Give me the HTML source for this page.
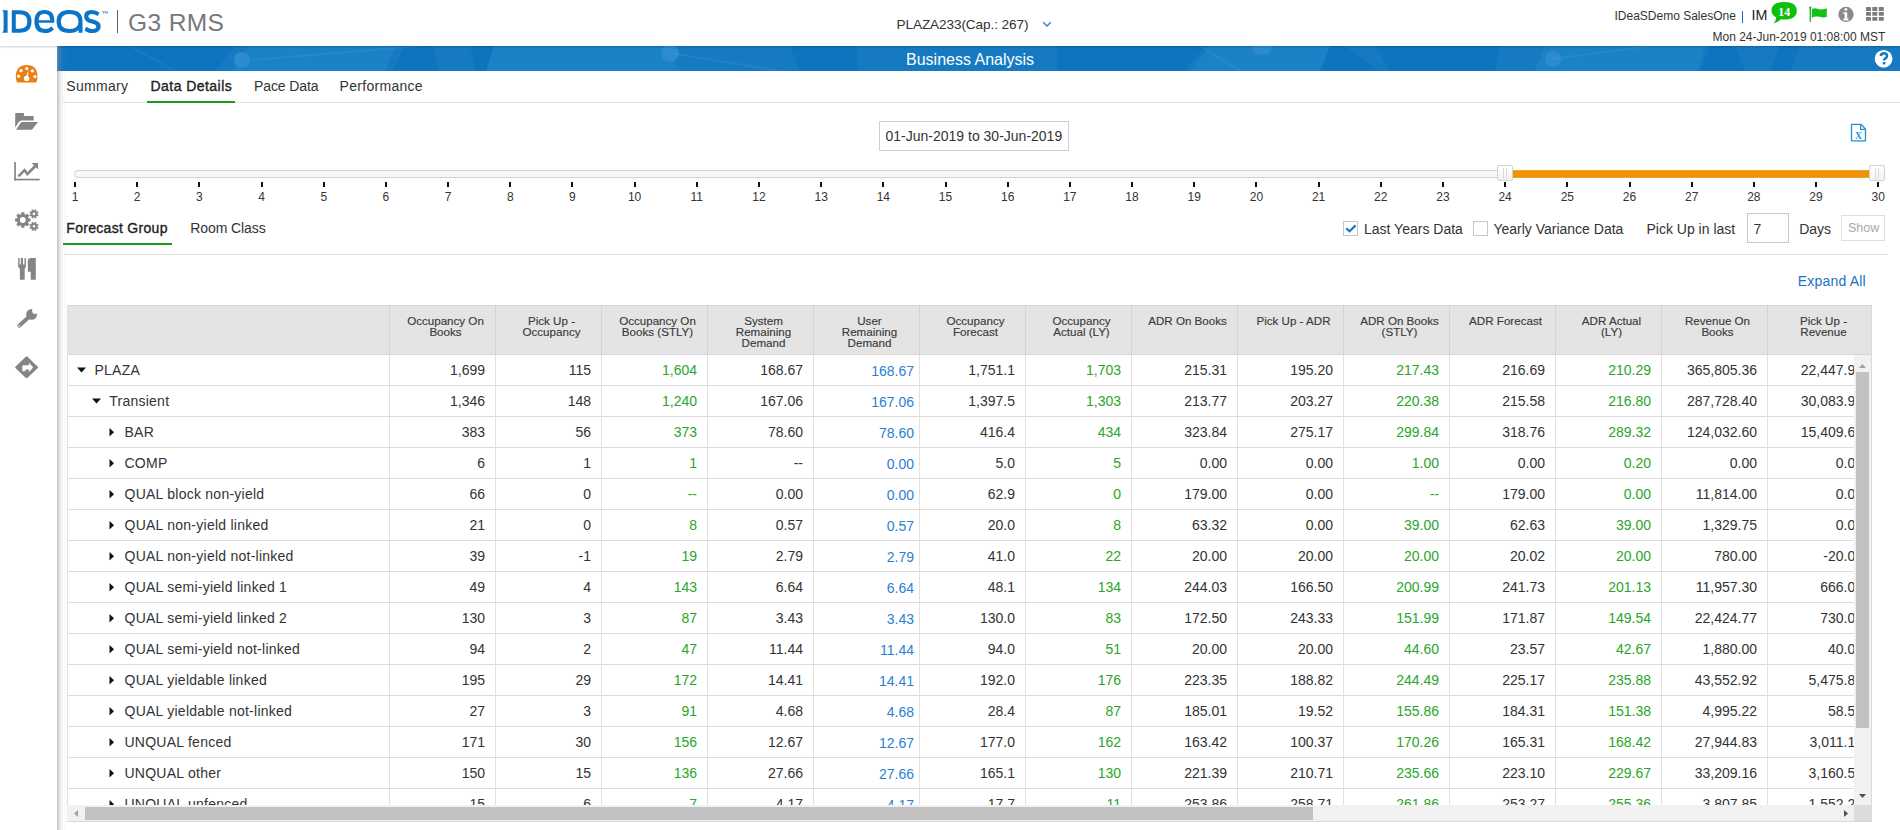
<!DOCTYPE html><html><head><meta charset="utf-8"><style>
html,body{margin:0;padding:0;-webkit-font-smoothing:antialiased;}
body{width:1900px;height:830px;overflow:hidden;position:relative;background:#fff;font-family:"Liberation Sans",sans-serif;color:#333;}
.a{position:absolute;}
.t{position:absolute;white-space:nowrap;line-height:0;}
.sb{-webkit-text-stroke:0.35px currentColor;}
.g{color:#2aa52a;}
.b{color:#2a7fd4;}
</style></head><body>

<!-- header -->
<div class="a" style="left:0;top:0;width:1900px;height:46px;background:#fff;box-shadow:0 1px 2px rgba(0,0,0,0.2);z-index:2;">
<svg class="a" style="left:0;top:8px" width="112" height="28" viewBox="0 0 112 28">
 <g fill="#0a74c8" fill-rule="evenodd">
  <path d="M2.2 2.2H7.6V24.8H2.2Q3.6 23.6 3.6 21.5V5.5Q3.6 3.4 2.2 2.2Z"/>
  <path d="M11.8 2.2H19.5Q31.5 2.2 31.5 13.5Q31.5 24.8 19.5 24.8H11.8ZM15.8 6.3V20.7H19.5Q27.4 20.7 27.4 13.5Q27.4 6.3 19.5 6.3Z"/>
  <path d="M54.3 14.8H38.6Q39.2 21 45.2 21Q48.6 21 51.4 18.4L54 21.4Q50.6 25 45 25Q34.4 25 34.4 13.5Q34.4 2 44.4 2Q54.5 2 54.3 13ZM38.6 12.2H50.3Q49.9 5.8 44.4 5.8Q39 5.8 38.6 12.2Z"/>
  <path d="M82.5 24.8H78.5V22Q76 25 69.5 25Q56.6 25 56.6 13.5Q56.6 2 69.5 2Q82.5 2 82.5 13ZM60.8 13.5Q60.8 21 69.7 21Q78.5 21 78.5 13.5Q78.5 6 69.7 6Q60.8 6 60.8 13.5Z"/>
  <path d="M99.6 4.8L97.6 8Q94.8 5.9 91.6 5.9Q88.4 5.9 88.4 8.4Q88.4 10.4 92.4 11.3Q100.7 13.2 100.7 18.2Q100.7 25 92 25Q87.2 25 84.4 22.2L86.4 18.8Q89.2 21.1 92.2 21.1Q96.3 21.1 96.3 18.5Q96.3 16.4 91.6 15.4Q84.1 13.8 84.1 8.4Q84.1 2 91.6 2Q96.4 2 99.6 4.8Z"/>
  <path d="M102 3.2H104.5V3.7H103.5V5.6H103V3.7H102ZM104.8 3.2H105.4L106.2 4.6L107 3.2H107.6V5.6H107.1V4L106.2 5.5L105.3 4V5.6H104.8Z"/>
 </g>
</svg>
<div class="a" style="left:117px;top:10px;width:1px;height:23px;background:#606060;"></div>
<div class="t" style="left:128px;top:22.7px;font-size:24.5px;color:#77787b;letter-spacing:0.4px;">G3 RMS</div>
<div class="t" style="left:896.5px;top:24.7px;font-size:13.6px;color:#333;letter-spacing:-0.1px;">PLAZA233(Cap.: 267)</div>
<svg class="a" style="left:1042px;top:21px" width="10" height="7"><path d="M1.2 1.2L5 5L8.8 1.2" fill="none" stroke="#2a7fd4" stroke-width="1.3"/></svg>
<div class="t" style="left:1614.5px;top:16px;font-size:12px;color:#333;">IDeaSDemo SalesOne</div>
<div class="a" style="left:1742px;top:11px;width:1px;height:12px;background:#1a6fc0;"></div>
<div class="t" style="left:1751.5px;top:14.7px;font-size:14.3px;color:#222;">IM</div>
<svg class="a" style="left:1770px;top:1px" width="28" height="24" viewBox="0 0 28 24">
 <path d="M14.2 1Q26.8 1 26.8 9.8Q26.8 18.6 14.2 18.6Q12.5 18.6 11 18.3Q7.5 21.5 3.3 22.5Q6 20 6.2 16.5Q1.5 14 1.5 9.8Q1.5 1 14.2 1Z" fill="#0cc00c"/>
 <text x="14.2" y="14.7" font-family="Liberation Serif" font-weight="bold" font-size="11.8" fill="#fff" text-anchor="middle">14</text>
</svg>
<svg class="a" style="left:1808px;top:6px" width="20" height="17" viewBox="0 0 20 17">
 <rect x="1.6" y="1.5" width="1.4" height="14.5" fill="#2bb52b"/>
 <circle cx="2.3" cy="1.8" r="1.2" fill="#2bb52b"/>
 <path d="M3.8 3.2Q6.5 1.6 9.5 2.8Q12.5 4 15 3.2Q17.5 2.5 18.8 2.2V10.8Q16.5 11.8 13.5 11.2Q10.5 10 7.5 10.6Q5.5 11.2 3.8 11.8Z" fill="#16c116"/>
</svg>
<svg class="a" style="left:1838px;top:6px" width="16" height="17" viewBox="0 0 16 17">
 <ellipse cx="8" cy="8.3" rx="7.7" ry="7.6" fill="#8a8a8a"/>
 <rect x="6.6" y="2.2" width="2.6" height="2.4" fill="#fff"/>
 <path d="M5.4 6.2H9.2V12.5H10.5V14.4H5.4V12.5H6.6V8H5.4Z" fill="#fff"/>
</svg>
<svg class="a" style="left:1866px;top:7px" width="18" height="14" viewBox="0 0 18 14">
 <g fill="#7c7c7c">
  <rect x="0" y="0" width="5" height="4" rx="0.6"/><rect x="6.3" y="0" width="5" height="4" rx="0.6"/><rect x="12.8" y="0" width="5" height="4" rx="0.6"/>
  <rect x="0" y="5" width="5" height="3.8" rx="0.6"/><rect x="6.3" y="5" width="5" height="3.8" rx="0.6"/><rect x="12.8" y="5" width="5" height="3.8" rx="0.6"/>
  <rect x="0" y="10" width="5" height="3.8" rx="0.6"/><rect x="6.3" y="10" width="5" height="3.8" rx="0.6"/><rect x="12.8" y="10" width="5" height="3.8" rx="0.6"/>
 </g>
</svg>
<div class="t" style="left:1712.5px;top:36.5px;font-size:12px;color:#333;">Mon 24-Jun-2019 01:08:00 MST</div>
</div>
<!-- sidebar -->

<svg class="a" style="left:0;top:46px" width="57" height="340" viewBox="0 46 57 340">
 <g>
  <path d="M17 82.6Q15.6 79.5 15.8 76Q16.4 65.1 26.7 65.1Q37 65.1 37.5 76Q37.7 79.5 36.3 82.6Z" fill="#ea7f14"/>
  <g fill="#fff">
   <circle cx="26.8" cy="68.6" r="1.6"/><circle cx="21" cy="70.7" r="1.6"/><circle cx="32.4" cy="70.9" r="1.6"/>
   <circle cx="18.6" cy="76.2" r="1.6"/><circle cx="35" cy="76.6" r="1.6"/>
   <circle cx="26.6" cy="78.4" r="2.7"/>
   <path d="M25.6 78L28 71.2L28.6 71.4L27.6 78.3Z"/>
  </g>
 </g>
 <g fill="#858585">
  <path d="M15.2 113.8Q15.2 113 16 113H23.9V116H33Q33.7 116 33.7 116.7V120.5H21.5Q19.6 120.5 18.6 122.2L15.2 127.6Z"/>
  <path d="M21.9 122H38L32 129.8H16.1L20.4 123.2Q21 122 21.9 122Z"/>
 </g>
 <g fill="#858585">
  <rect x="14.2" y="162" width="1.7" height="18.4"/>
  <rect x="14.2" y="178.7" width="25.4" height="1.7"/>
  <path d="M18.4 176.4L24.6 170.2L27.4 174L35.4 166" fill="none" stroke="#858585" stroke-width="2.5"/><path d="M31.6 162.9H38V169.3Z"/>
 </g>
 <g fill="#858585">
<path fill-rule="evenodd" d="M28.45 218.29 L30.54 218.43 L30.54 221.57 L28.45 221.71 L28.00 222.78 L29.39 224.36 L27.16 226.59 L25.58 225.20 L24.51 225.65 L24.37 227.74 L21.23 227.74 L21.09 225.65 L20.02 225.20 L18.44 226.59 L16.21 224.36 L17.60 222.78 L17.15 221.71 L15.06 221.57 L15.06 218.43 L17.15 218.29 L17.60 217.22 L16.21 215.64 L18.44 213.41 L20.02 214.80 L21.09 214.35 L21.23 212.26 L24.37 212.26 L24.51 214.35 L25.58 214.80 L27.16 213.41 L29.39 215.64 L28.00 217.22ZM25.70 220.00A2.9 2.9 0 1 0 19.90 220.00A2.9 2.9 0 1 0 25.70 220.00Z"/>
<path fill-rule="evenodd" d="M37.38 214.23 L38.61 214.80 L37.90 216.53 L36.63 216.06 L36.16 216.53 L36.63 217.80 L34.90 218.51 L34.33 217.28 L33.67 217.28 L33.10 218.51 L31.37 217.80 L31.84 216.53 L31.37 216.06 L30.10 216.53 L29.39 214.80 L30.62 214.23 L30.62 213.57 L29.39 213.00 L30.10 211.27 L31.37 211.74 L31.84 211.27 L31.37 210.00 L33.10 209.29 L33.67 210.52 L34.33 210.52 L34.90 209.29 L36.63 210.00 L36.16 211.27 L36.63 211.74 L37.90 211.27 L38.61 213.00 L37.38 213.57ZM35.30 213.90A1.3 1.3 0 1 0 32.70 213.90A1.3 1.3 0 1 0 35.30 213.90Z"/>
<path fill-rule="evenodd" d="M37.38 226.63 L38.61 227.20 L37.90 228.93 L36.63 228.46 L36.16 228.93 L36.63 230.20 L34.90 230.91 L34.33 229.68 L33.67 229.68 L33.10 230.91 L31.37 230.20 L31.84 228.93 L31.37 228.46 L30.10 228.93 L29.39 227.20 L30.62 226.63 L30.62 225.97 L29.39 225.40 L30.10 223.67 L31.37 224.14 L31.84 223.67 L31.37 222.40 L33.10 221.69 L33.67 222.92 L34.33 222.92 L34.90 221.69 L36.63 222.40 L36.16 223.67 L36.63 224.14 L37.90 223.67 L38.61 225.40 L37.38 225.97ZM35.30 226.30A1.3 1.3 0 1 0 32.70 226.30A1.3 1.3 0 1 0 35.30 226.30Z"/>
 </g>
 <g fill="#858585">
  <path d="M18.2 258H19.6V264.5H20.8V258H23V264.5H24.5V258H25.9V266Q25.9 268.2 24.7 268.8V279.7H19.9V268.8Q18.2 268.2 18.2 266Z"/>
  <path d="M27.8 261.2Q27.8 258 31 258H35.8V279.7H30.7V271.7H27.8Z"/>
 </g>
 <g fill="#858585">
  <path d="M19.2 325.8L29.5 316.5" stroke="#858585" stroke-width="3.9" stroke-linecap="round" fill="none"/>
  <circle cx="31.6" cy="314.4" r="5.4"/>
  <circle cx="34.9" cy="311.1" r="2.8" fill="#fff"/>
  <path d="M34.9 311.1L40 306L41 312L37 314Z" fill="#fff"/>
  <circle cx="19.2" cy="325.8" r="0.85" fill="#fff"/>
 </g>
 <g>
  <path d="M26.6 357.2L37.2 367.3L26.6 377.4L16 367.3Z" fill="#858585" stroke="#858585" stroke-width="1.8" stroke-linejoin="round"/>
  <path d="M22.3 371.2V366.3Q22.3 365.3 23.3 365.3H28.9V362.6L33.1 367.4L28.9 372.2V369.4H25.3V371.2Z" fill="#fff"/>
 </g>
</svg>
<!-- blue bar -->
<div class="a" style="left:57px;top:46px;width:1843px;height:25px;background:#167ac3;overflow:hidden;">
 <svg class="a" style="left:0;top:0" width="1843" height="25" viewBox="57 0 1843 25">
  <g fill="#0e74c0">
   <path d="M57 0H235L215 25H57Z"/>
   <path d="M404 0H434L438 25H393Z"/>
   <path d="M470 0H494L486 25H476Z"/>
   <path d="M790 0H857V25H800Z"/>
   <path d="M1057 0H1205L1185 25H1057Z"/>
   <path d="M1330 0H1345L1380 25H1320Z"/>
   <path d="M1375 0H1457V25H1390Z"/>
   <path d="M1457 0H1500L1495 25H1457Z"/>
   <path d="M1710 0H1735L1745 25H1700Z"/>
   <path d="M1780 0H1800L1790 25H1770Z"/>
  </g>
  <g fill="#1c82c8">
   <path d="M250 0H395L385 25H232Z"/>
   <path d="M494 0H660L680 25H486Z"/>
   <path d="M1210 0H1330L1320 25H1190Z"/>
   <path d="M1545 0H1705L1698 25H1535Z"/>
  </g>
  <g fill="#2d8bcf">
   <circle cx="242" cy="14" r="8"/>
   <circle cx="670" cy="7" r="9"/>
   <circle cx="1262" cy="-2" r="11"/>
   <circle cx="1553" cy="13" r="8"/>
  </g>
  <g stroke="rgba(255,255,255,0.05)" stroke-width="2" fill="none">
   <path d="M130 0L175 25"/><path d="M250 14L420 0"/><path d="M670 7L780 25"/><path d="M1200 0L1240 25"/><path d="M1553 13L1650 0"/>
  </g>
 </svg>
 <div class="t" style="left:849px;top:14px;font-size:16px;color:#fff;">Business Analysis</div>
 <svg class="a" style="left:1817px;top:3px" width="20" height="20" viewBox="0 0 20 20">
  <circle cx="9.6" cy="9.8" r="8.9" fill="#fff"/>
  <path d="M6.7 6.9Q7.2 4.3 9.9 4.3Q13 4.3 13 6.9Q13 8.5 11.2 9.5Q10.1 10.1 10.1 11.6" fill="none" stroke="#1375c1" stroke-width="2.5"/>
  <rect x="8.8" y="13" width="2.6" height="2.4" fill="#1375c1"/>
 </svg>
</div>

<div class="a" style="left:57px;top:46px;width:1px;height:784px;background:rgba(150,150,150,0.55);z-index:3;"></div><div class="a" style="left:58px;top:46px;width:1px;height:784px;background:rgba(150,150,150,0.4);z-index:3;"></div><div class="a" style="left:59px;top:46px;width:1px;height:784px;background:rgba(150,150,150,0.28);z-index:3;"></div><div class="a" style="left:60px;top:46px;width:1px;height:784px;background:rgba(150,150,150,0.19);z-index:3;"></div><div class="a" style="left:61px;top:46px;width:1px;height:784px;background:rgba(150,150,150,0.12);z-index:3;"></div><div class="a" style="left:62px;top:46px;width:1px;height:784px;background:rgba(150,150,150,0.08);z-index:3;"></div><div class="a" style="left:63px;top:46px;width:1px;height:784px;background:rgba(150,150,150,0.06);z-index:3;"></div><div class="a" style="left:64px;top:46px;width:1px;height:784px;background:rgba(150,150,150,0.05);z-index:3;"></div><div class="a" style="left:65px;top:46px;width:1px;height:784px;background:rgba(150,150,150,0.04);z-index:3;"></div><div class="a" style="left:66px;top:46px;width:1px;height:784px;background:rgba(150,150,150,0.03);z-index:3;"></div>

<div class="t" style="left:66.3px;top:86px;font-size:14px;color:#333;letter-spacing:0.3px;">Summary</div>
<div class="t sb" style="left:150.5px;top:86px;font-size:14px;color:#222;letter-spacing:0.45px;">Data Details</div>
<div class="t" style="left:254px;top:86px;font-size:14px;color:#333;letter-spacing:-0.1px;">Pace Data</div>
<div class="t" style="left:339.5px;top:86px;font-size:14px;color:#333;letter-spacing:0.3px;">Performance</div>
<div class="a" style="left:63px;top:102px;width:1837px;height:1px;background:#e3e3e3;"></div>
<div class="a" style="left:147px;top:100.5px;width:88px;height:2.5px;background:#1a9a1a;"></div>
<div class="a" style="left:879px;top:121px;width:188px;height:28px;border:1px solid #cfcfcf;"></div>
<div class="t" style="left:885.5px;top:135.5px;font-size:14px;color:#333;">01-Jun-2019 to 30-Jun-2019</div>
<svg class="a" style="left:1849px;top:123px" width="18" height="19" viewBox="0 0 18 19">
 <path d="M2.5 1.3H11.8L16.5 6V17.8H2.5Z" fill="none" stroke="#2290d8" stroke-width="1.3" stroke-linejoin="round"/>
 <path d="M11.6 1.4V6.3H16.4" fill="none" stroke="#2290d8" stroke-width="1.2"/>
 <text x="9.5" y="15.6" font-family="Liberation Serif" font-weight="bold" font-size="9.5" fill="#2290d8" text-anchor="middle">X</text>
</svg>
<div class="a" style="left:74px;top:170px;width:1808px;height:8px;box-sizing:border-box;border:1px solid #d0d0d0;border-radius:4px;background:#f8f8f8;"></div>
<div class="a" style="left:1510px;top:170px;width:362px;height:8px;box-sizing:border-box;border-top:1px solid #e6a03c;border-bottom:1px solid #e6a03c;background:#f39200;"></div>
<div class="a" style="left:1496.5px;top:165px;width:16px;height:16px;box-sizing:border-box;border:1px solid #d2d2d2;border-radius:2px;background:linear-gradient(#fff,#f3f3f3);"></div>
<div class="a" style="left:1502.5px;top:168px;width:1px;height:11px;background:#dadada;"></div>
<div class="a" style="left:1505.5px;top:168px;width:1px;height:11px;background:#dadada;"></div>
<div class="a" style="left:1869px;top:165px;width:16px;height:16px;box-sizing:border-box;border:1px solid #d2d2d2;border-radius:2px;background:linear-gradient(#fff,#f3f3f3);"></div>
<div class="a" style="left:1875px;top:168px;width:1px;height:11px;background:#dadada;"></div>
<div class="a" style="left:1878px;top:168px;width:1px;height:11px;background:#dadada;"></div>
<div class="a" style="left:74.00px;top:182px;width:2px;height:5px;background:#111;"></div>
<div class="t" style="left:45.00px;top:196.5px;width:60px;text-align:center;font-size:12px;color:#333;">1</div>
<div class="a" style="left:136.18px;top:182px;width:2px;height:5px;background:#111;"></div>
<div class="t" style="left:107.18px;top:196.5px;width:60px;text-align:center;font-size:12px;color:#333;">2</div>
<div class="a" style="left:198.36px;top:182px;width:2px;height:5px;background:#111;"></div>
<div class="t" style="left:169.36px;top:196.5px;width:60px;text-align:center;font-size:12px;color:#333;">3</div>
<div class="a" style="left:260.54px;top:182px;width:2px;height:5px;background:#111;"></div>
<div class="t" style="left:231.54px;top:196.5px;width:60px;text-align:center;font-size:12px;color:#333;">4</div>
<div class="a" style="left:322.72px;top:182px;width:2px;height:5px;background:#111;"></div>
<div class="t" style="left:293.72px;top:196.5px;width:60px;text-align:center;font-size:12px;color:#333;">5</div>
<div class="a" style="left:384.90px;top:182px;width:2px;height:5px;background:#111;"></div>
<div class="t" style="left:355.90px;top:196.5px;width:60px;text-align:center;font-size:12px;color:#333;">6</div>
<div class="a" style="left:447.08px;top:182px;width:2px;height:5px;background:#111;"></div>
<div class="t" style="left:418.08px;top:196.5px;width:60px;text-align:center;font-size:12px;color:#333;">7</div>
<div class="a" style="left:509.26px;top:182px;width:2px;height:5px;background:#111;"></div>
<div class="t" style="left:480.26px;top:196.5px;width:60px;text-align:center;font-size:12px;color:#333;">8</div>
<div class="a" style="left:571.44px;top:182px;width:2px;height:5px;background:#111;"></div>
<div class="t" style="left:542.44px;top:196.5px;width:60px;text-align:center;font-size:12px;color:#333;">9</div>
<div class="a" style="left:633.62px;top:182px;width:2px;height:5px;background:#111;"></div>
<div class="t" style="left:604.62px;top:196.5px;width:60px;text-align:center;font-size:12px;color:#333;">10</div>
<div class="a" style="left:695.80px;top:182px;width:2px;height:5px;background:#111;"></div>
<div class="t" style="left:666.80px;top:196.5px;width:60px;text-align:center;font-size:12px;color:#333;">11</div>
<div class="a" style="left:757.98px;top:182px;width:2px;height:5px;background:#111;"></div>
<div class="t" style="left:728.98px;top:196.5px;width:60px;text-align:center;font-size:12px;color:#333;">12</div>
<div class="a" style="left:820.16px;top:182px;width:2px;height:5px;background:#111;"></div>
<div class="t" style="left:791.16px;top:196.5px;width:60px;text-align:center;font-size:12px;color:#333;">13</div>
<div class="a" style="left:882.34px;top:182px;width:2px;height:5px;background:#111;"></div>
<div class="t" style="left:853.34px;top:196.5px;width:60px;text-align:center;font-size:12px;color:#333;">14</div>
<div class="a" style="left:944.52px;top:182px;width:2px;height:5px;background:#111;"></div>
<div class="t" style="left:915.52px;top:196.5px;width:60px;text-align:center;font-size:12px;color:#333;">15</div>
<div class="a" style="left:1006.70px;top:182px;width:2px;height:5px;background:#111;"></div>
<div class="t" style="left:977.70px;top:196.5px;width:60px;text-align:center;font-size:12px;color:#333;">16</div>
<div class="a" style="left:1068.88px;top:182px;width:2px;height:5px;background:#111;"></div>
<div class="t" style="left:1039.88px;top:196.5px;width:60px;text-align:center;font-size:12px;color:#333;">17</div>
<div class="a" style="left:1131.06px;top:182px;width:2px;height:5px;background:#111;"></div>
<div class="t" style="left:1102.06px;top:196.5px;width:60px;text-align:center;font-size:12px;color:#333;">18</div>
<div class="a" style="left:1193.24px;top:182px;width:2px;height:5px;background:#111;"></div>
<div class="t" style="left:1164.24px;top:196.5px;width:60px;text-align:center;font-size:12px;color:#333;">19</div>
<div class="a" style="left:1255.42px;top:182px;width:2px;height:5px;background:#111;"></div>
<div class="t" style="left:1226.42px;top:196.5px;width:60px;text-align:center;font-size:12px;color:#333;">20</div>
<div class="a" style="left:1317.60px;top:182px;width:2px;height:5px;background:#111;"></div>
<div class="t" style="left:1288.60px;top:196.5px;width:60px;text-align:center;font-size:12px;color:#333;">21</div>
<div class="a" style="left:1379.78px;top:182px;width:2px;height:5px;background:#111;"></div>
<div class="t" style="left:1350.78px;top:196.5px;width:60px;text-align:center;font-size:12px;color:#333;">22</div>
<div class="a" style="left:1441.96px;top:182px;width:2px;height:5px;background:#111;"></div>
<div class="t" style="left:1412.96px;top:196.5px;width:60px;text-align:center;font-size:12px;color:#333;">23</div>
<div class="a" style="left:1504.14px;top:182px;width:2px;height:5px;background:#111;"></div>
<div class="t" style="left:1475.14px;top:196.5px;width:60px;text-align:center;font-size:12px;color:#333;">24</div>
<div class="a" style="left:1566.32px;top:182px;width:2px;height:5px;background:#111;"></div>
<div class="t" style="left:1537.32px;top:196.5px;width:60px;text-align:center;font-size:12px;color:#333;">25</div>
<div class="a" style="left:1628.50px;top:182px;width:2px;height:5px;background:#111;"></div>
<div class="t" style="left:1599.50px;top:196.5px;width:60px;text-align:center;font-size:12px;color:#333;">26</div>
<div class="a" style="left:1690.68px;top:182px;width:2px;height:5px;background:#111;"></div>
<div class="t" style="left:1661.68px;top:196.5px;width:60px;text-align:center;font-size:12px;color:#333;">27</div>
<div class="a" style="left:1752.86px;top:182px;width:2px;height:5px;background:#111;"></div>
<div class="t" style="left:1723.86px;top:196.5px;width:60px;text-align:center;font-size:12px;color:#333;">28</div>
<div class="a" style="left:1815.04px;top:182px;width:2px;height:5px;background:#111;"></div>
<div class="t" style="left:1786.04px;top:196.5px;width:60px;text-align:center;font-size:12px;color:#333;">29</div>
<div class="a" style="left:1877.22px;top:182px;width:2px;height:5px;background:#111;"></div>
<div class="t" style="left:1848.22px;top:196.5px;width:60px;text-align:center;font-size:12px;color:#333;">30</div>
<div class="t sb" style="left:66.3px;top:228px;font-size:14px;color:#222;letter-spacing:0.3px;">Forecast Group</div>
<div class="t" style="left:190.3px;top:228px;font-size:14px;color:#333;letter-spacing:-0.1px;">Room Class</div>
<div class="a" style="left:63px;top:242.5px;width:109px;height:2.5px;background:#1a9a1a;"></div>
<div class="a" style="left:64px;top:254px;width:1824px;height:1px;background:#e3e3e3;"></div>
<div class="a" style="left:1343px;top:221px;width:15px;height:15px;box-sizing:border-box;border:1px solid #c6c6c6;background:#fff;"></div>
<svg class="a" style="left:1343px;top:221px" width="15" height="15"><path d="M3.2 7.2L6.6 10.2L12.6 4.4" fill="none" stroke="#1a78c2" stroke-width="2.2"/></svg>
<div class="t" style="left:1364px;top:229px;font-size:14px;color:#333;">Last Years Data</div>
<div class="a" style="left:1473px;top:221px;width:15px;height:15px;box-sizing:border-box;border:1px solid #c6c6c6;background:#fff;"></div>
<div class="t" style="left:1493.4px;top:229px;font-size:14px;color:#333;">Yearly Variance Data</div>
<div class="t" style="left:1646.5px;top:229px;font-size:14px;color:#333;">Pick Up in last</div>
<div class="a" style="left:1747px;top:213px;width:42px;height:30px;box-sizing:border-box;border:1px solid #c8c8c8;background:#fff;"></div>
<div class="t" style="left:1753.5px;top:229px;font-size:14px;color:#333;">7</div>
<div class="t" style="left:1799.2px;top:229px;font-size:14px;color:#333;">Days</div>
<div class="a" style="left:1841px;top:215px;width:44px;height:26px;box-sizing:border-box;border:1px solid #e0e0e0;background:#fff;"></div>
<div class="t" style="left:1848px;top:228px;font-size:12.5px;color:#a8a8a8;">Show</div>
<div class="t" style="left:1797.7px;top:280.5px;font-size:14px;color:#2270c8;letter-spacing:0.2px;">Expand All</div>
<div class="a" style="left:67px;top:305px;width:1805px;height:517px;overflow:hidden;background:#fff;">
<div class="a" style="left:0;top:0;width:1805px;height:50px;background:#e4e4e4;border-top:1px solid #d6d6d6;box-sizing:border-box;"></div>
<div class="a" style="left:322px;top:0;width:1px;height:50px;background:#d4d4d4;"></div>
<div class="a hd" style="left:329px;top:10px;width:99px;text-align:center;font-size:11.6px;line-height:11px;color:#3a3a3a;-webkit-text-stroke:0.15px #3a3a3a;">Occupancy On<br>Books</div>
<div class="a" style="left:428px;top:0;width:1px;height:50px;background:#d4d4d4;"></div>
<div class="a hd" style="left:435px;top:10px;width:99px;text-align:center;font-size:11.6px;line-height:11px;color:#3a3a3a;-webkit-text-stroke:0.15px #3a3a3a;">Pick Up -<br>Occupancy</div>
<div class="a" style="left:534px;top:0;width:1px;height:50px;background:#d4d4d4;"></div>
<div class="a hd" style="left:541px;top:10px;width:99px;text-align:center;font-size:11.6px;line-height:11px;color:#3a3a3a;-webkit-text-stroke:0.15px #3a3a3a;">Occupancy On<br>Books (STLY)</div>
<div class="a" style="left:640px;top:0;width:1px;height:50px;background:#d4d4d4;"></div>
<div class="a hd" style="left:647px;top:10px;width:99px;text-align:center;font-size:11.6px;line-height:11px;color:#3a3a3a;-webkit-text-stroke:0.15px #3a3a3a;">System<br>Remaining<br>Demand</div>
<div class="a" style="left:746px;top:0;width:1px;height:50px;background:#d4d4d4;"></div>
<div class="a hd" style="left:753px;top:10px;width:99px;text-align:center;font-size:11.6px;line-height:11px;color:#3a3a3a;-webkit-text-stroke:0.15px #3a3a3a;">User<br>Remaining<br>Demand</div>
<div class="a" style="left:852px;top:0;width:1px;height:50px;background:#d4d4d4;"></div>
<div class="a hd" style="left:859px;top:10px;width:99px;text-align:center;font-size:11.6px;line-height:11px;color:#3a3a3a;-webkit-text-stroke:0.15px #3a3a3a;">Occupancy<br>Forecast</div>
<div class="a" style="left:958px;top:0;width:1px;height:50px;background:#d4d4d4;"></div>
<div class="a hd" style="left:965px;top:10px;width:99px;text-align:center;font-size:11.6px;line-height:11px;color:#3a3a3a;-webkit-text-stroke:0.15px #3a3a3a;">Occupancy<br>Actual (LY)</div>
<div class="a" style="left:1064px;top:0;width:1px;height:50px;background:#d4d4d4;"></div>
<div class="a hd" style="left:1071px;top:10px;width:99px;text-align:center;font-size:11.6px;line-height:11px;color:#3a3a3a;-webkit-text-stroke:0.15px #3a3a3a;">ADR On Books</div>
<div class="a" style="left:1170px;top:0;width:1px;height:50px;background:#d4d4d4;"></div>
<div class="a hd" style="left:1177px;top:10px;width:99px;text-align:center;font-size:11.6px;line-height:11px;color:#3a3a3a;-webkit-text-stroke:0.15px #3a3a3a;">Pick Up - ADR</div>
<div class="a" style="left:1276px;top:0;width:1px;height:50px;background:#d4d4d4;"></div>
<div class="a hd" style="left:1283px;top:10px;width:99px;text-align:center;font-size:11.6px;line-height:11px;color:#3a3a3a;-webkit-text-stroke:0.15px #3a3a3a;">ADR On Books<br>(STLY)</div>
<div class="a" style="left:1382px;top:0;width:1px;height:50px;background:#d4d4d4;"></div>
<div class="a hd" style="left:1389px;top:10px;width:99px;text-align:center;font-size:11.6px;line-height:11px;color:#3a3a3a;-webkit-text-stroke:0.15px #3a3a3a;">ADR Forecast</div>
<div class="a" style="left:1488px;top:0;width:1px;height:50px;background:#d4d4d4;"></div>
<div class="a hd" style="left:1495px;top:10px;width:99px;text-align:center;font-size:11.6px;line-height:11px;color:#3a3a3a;-webkit-text-stroke:0.15px #3a3a3a;">ADR Actual<br>(LY)</div>
<div class="a" style="left:1594px;top:0;width:1px;height:50px;background:#d4d4d4;"></div>
<div class="a hd" style="left:1601px;top:10px;width:99px;text-align:center;font-size:11.6px;line-height:11px;color:#3a3a3a;-webkit-text-stroke:0.15px #3a3a3a;">Revenue On<br>Books</div>
<div class="a" style="left:1700px;top:0;width:1px;height:50px;background:#d4d4d4;"></div>
<div class="a hd" style="left:1707px;top:10px;width:99px;text-align:center;font-size:11.6px;line-height:11px;color:#3a3a3a;-webkit-text-stroke:0.15px #3a3a3a;">Pick Up -<br>Revenue</div>
<div class="a" style="left:0;top:49px;width:1805px;height:1px;background:#d6d6d6;"></div>
<div class="a" style="left:0;top:50px;width:1787px;height:450px;overflow:hidden;">
<div class="a" style="left:0;top:0px;width:1805px;height:31px;">
<div class="a" style="left:0;top:30px;width:1805px;height:1px;background:#dcdcdc;"></div>
<svg class="a" style="left:10px;top:12px" width="9" height="6"><path d="M0 0.5H9L4.5 5.5Z" fill="#111"/></svg>
<div class="a" style="left:27.5px;top:5px;font-size:14px;line-height:20px;white-space:nowrap;color:#333;letter-spacing:0.25px;">PLAZA</div>
<div class="a" style="left:322px;top:0;width:1px;height:31px;background:#e0e0e0;"></div>
<div class="a " style="left:323px;top:5px;width:95px;text-align:right;font-size:14px;line-height:20px;white-space:nowrap;">1,699</div>
<div class="a" style="left:428px;top:0;width:1px;height:31px;background:#e0e0e0;"></div>
<div class="a " style="left:429px;top:5px;width:95px;text-align:right;font-size:14px;line-height:20px;white-space:nowrap;">115</div>
<div class="a" style="left:534px;top:0;width:1px;height:31px;background:#e0e0e0;"></div>
<div class="a g" style="left:535px;top:5px;width:95px;text-align:right;font-size:14px;line-height:20px;white-space:nowrap;">1,604</div>
<div class="a" style="left:640px;top:0;width:1px;height:31px;background:#e0e0e0;"></div>
<div class="a " style="left:641px;top:5px;width:95px;text-align:right;font-size:14px;line-height:20px;white-space:nowrap;">168.67</div>
<div class="a" style="left:746px;top:0;width:1px;height:31px;background:#e0e0e0;"></div>
<div class="a b" style="left:747px;top:6px;width:100px;text-align:right;font-size:14px;line-height:20px;white-space:nowrap;">168.67</div>
<div class="a" style="left:852px;top:0;width:1px;height:31px;background:#e0e0e0;"></div>
<div class="a " style="left:853px;top:5px;width:95px;text-align:right;font-size:14px;line-height:20px;white-space:nowrap;">1,751.1</div>
<div class="a" style="left:958px;top:0;width:1px;height:31px;background:#e0e0e0;"></div>
<div class="a g" style="left:959px;top:5px;width:95px;text-align:right;font-size:14px;line-height:20px;white-space:nowrap;">1,703</div>
<div class="a" style="left:1064px;top:0;width:1px;height:31px;background:#e0e0e0;"></div>
<div class="a " style="left:1065px;top:5px;width:95px;text-align:right;font-size:14px;line-height:20px;white-space:nowrap;">215.31</div>
<div class="a" style="left:1170px;top:0;width:1px;height:31px;background:#e0e0e0;"></div>
<div class="a " style="left:1171px;top:5px;width:95px;text-align:right;font-size:14px;line-height:20px;white-space:nowrap;">195.20</div>
<div class="a" style="left:1276px;top:0;width:1px;height:31px;background:#e0e0e0;"></div>
<div class="a g" style="left:1277px;top:5px;width:95px;text-align:right;font-size:14px;line-height:20px;white-space:nowrap;">217.43</div>
<div class="a" style="left:1382px;top:0;width:1px;height:31px;background:#e0e0e0;"></div>
<div class="a " style="left:1383px;top:5px;width:95px;text-align:right;font-size:14px;line-height:20px;white-space:nowrap;">216.69</div>
<div class="a" style="left:1488px;top:0;width:1px;height:31px;background:#e0e0e0;"></div>
<div class="a g" style="left:1489px;top:5px;width:95px;text-align:right;font-size:14px;line-height:20px;white-space:nowrap;">210.29</div>
<div class="a" style="left:1594px;top:0;width:1px;height:31px;background:#e0e0e0;"></div>
<div class="a " style="left:1595px;top:5px;width:95px;text-align:right;font-size:14px;line-height:20px;white-space:nowrap;">365,805.36</div>
<div class="a" style="left:1700px;top:0;width:1px;height:31px;background:#e0e0e0;"></div>
<div class="a " style="left:1701px;top:5px;width:95px;text-align:right;font-size:14px;line-height:20px;white-space:nowrap;">22,447.90</div>
</div>
<div class="a" style="left:0;top:31px;width:1805px;height:31px;">
<div class="a" style="left:0;top:30px;width:1805px;height:1px;background:#dcdcdc;"></div>
<svg class="a" style="left:25px;top:12px" width="9" height="6"><path d="M0 0.5H9L4.5 5.5Z" fill="#111"/></svg>
<div class="a" style="left:42.2px;top:5px;font-size:14px;line-height:20px;white-space:nowrap;color:#333;letter-spacing:0.25px;">Transient</div>
<div class="a" style="left:322px;top:0;width:1px;height:31px;background:#e0e0e0;"></div>
<div class="a " style="left:323px;top:5px;width:95px;text-align:right;font-size:14px;line-height:20px;white-space:nowrap;">1,346</div>
<div class="a" style="left:428px;top:0;width:1px;height:31px;background:#e0e0e0;"></div>
<div class="a " style="left:429px;top:5px;width:95px;text-align:right;font-size:14px;line-height:20px;white-space:nowrap;">148</div>
<div class="a" style="left:534px;top:0;width:1px;height:31px;background:#e0e0e0;"></div>
<div class="a g" style="left:535px;top:5px;width:95px;text-align:right;font-size:14px;line-height:20px;white-space:nowrap;">1,240</div>
<div class="a" style="left:640px;top:0;width:1px;height:31px;background:#e0e0e0;"></div>
<div class="a " style="left:641px;top:5px;width:95px;text-align:right;font-size:14px;line-height:20px;white-space:nowrap;">167.06</div>
<div class="a" style="left:746px;top:0;width:1px;height:31px;background:#e0e0e0;"></div>
<div class="a b" style="left:747px;top:6px;width:100px;text-align:right;font-size:14px;line-height:20px;white-space:nowrap;">167.06</div>
<div class="a" style="left:852px;top:0;width:1px;height:31px;background:#e0e0e0;"></div>
<div class="a " style="left:853px;top:5px;width:95px;text-align:right;font-size:14px;line-height:20px;white-space:nowrap;">1,397.5</div>
<div class="a" style="left:958px;top:0;width:1px;height:31px;background:#e0e0e0;"></div>
<div class="a g" style="left:959px;top:5px;width:95px;text-align:right;font-size:14px;line-height:20px;white-space:nowrap;">1,303</div>
<div class="a" style="left:1064px;top:0;width:1px;height:31px;background:#e0e0e0;"></div>
<div class="a " style="left:1065px;top:5px;width:95px;text-align:right;font-size:14px;line-height:20px;white-space:nowrap;">213.77</div>
<div class="a" style="left:1170px;top:0;width:1px;height:31px;background:#e0e0e0;"></div>
<div class="a " style="left:1171px;top:5px;width:95px;text-align:right;font-size:14px;line-height:20px;white-space:nowrap;">203.27</div>
<div class="a" style="left:1276px;top:0;width:1px;height:31px;background:#e0e0e0;"></div>
<div class="a g" style="left:1277px;top:5px;width:95px;text-align:right;font-size:14px;line-height:20px;white-space:nowrap;">220.38</div>
<div class="a" style="left:1382px;top:0;width:1px;height:31px;background:#e0e0e0;"></div>
<div class="a " style="left:1383px;top:5px;width:95px;text-align:right;font-size:14px;line-height:20px;white-space:nowrap;">215.58</div>
<div class="a" style="left:1488px;top:0;width:1px;height:31px;background:#e0e0e0;"></div>
<div class="a g" style="left:1489px;top:5px;width:95px;text-align:right;font-size:14px;line-height:20px;white-space:nowrap;">216.80</div>
<div class="a" style="left:1594px;top:0;width:1px;height:31px;background:#e0e0e0;"></div>
<div class="a " style="left:1595px;top:5px;width:95px;text-align:right;font-size:14px;line-height:20px;white-space:nowrap;">287,728.40</div>
<div class="a" style="left:1700px;top:0;width:1px;height:31px;background:#e0e0e0;"></div>
<div class="a " style="left:1701px;top:5px;width:95px;text-align:right;font-size:14px;line-height:20px;white-space:nowrap;">30,083.90</div>
</div>
<div class="a" style="left:0;top:62px;width:1805px;height:31px;">
<div class="a" style="left:0;top:30px;width:1805px;height:1px;background:#dcdcdc;"></div>
<svg class="a" style="left:42px;top:11px" width="6" height="9"><path d="M0.5 0V8.5L5 4.25Z" fill="#111"/></svg>
<div class="a" style="left:57.5px;top:5px;font-size:14px;line-height:20px;white-space:nowrap;color:#333;letter-spacing:0.25px;">BAR</div>
<div class="a" style="left:322px;top:0;width:1px;height:31px;background:#e0e0e0;"></div>
<div class="a " style="left:323px;top:5px;width:95px;text-align:right;font-size:14px;line-height:20px;white-space:nowrap;">383</div>
<div class="a" style="left:428px;top:0;width:1px;height:31px;background:#e0e0e0;"></div>
<div class="a " style="left:429px;top:5px;width:95px;text-align:right;font-size:14px;line-height:20px;white-space:nowrap;">56</div>
<div class="a" style="left:534px;top:0;width:1px;height:31px;background:#e0e0e0;"></div>
<div class="a g" style="left:535px;top:5px;width:95px;text-align:right;font-size:14px;line-height:20px;white-space:nowrap;">373</div>
<div class="a" style="left:640px;top:0;width:1px;height:31px;background:#e0e0e0;"></div>
<div class="a " style="left:641px;top:5px;width:95px;text-align:right;font-size:14px;line-height:20px;white-space:nowrap;">78.60</div>
<div class="a" style="left:746px;top:0;width:1px;height:31px;background:#e0e0e0;"></div>
<div class="a b" style="left:747px;top:6px;width:100px;text-align:right;font-size:14px;line-height:20px;white-space:nowrap;">78.60</div>
<div class="a" style="left:852px;top:0;width:1px;height:31px;background:#e0e0e0;"></div>
<div class="a " style="left:853px;top:5px;width:95px;text-align:right;font-size:14px;line-height:20px;white-space:nowrap;">416.4</div>
<div class="a" style="left:958px;top:0;width:1px;height:31px;background:#e0e0e0;"></div>
<div class="a g" style="left:959px;top:5px;width:95px;text-align:right;font-size:14px;line-height:20px;white-space:nowrap;">434</div>
<div class="a" style="left:1064px;top:0;width:1px;height:31px;background:#e0e0e0;"></div>
<div class="a " style="left:1065px;top:5px;width:95px;text-align:right;font-size:14px;line-height:20px;white-space:nowrap;">323.84</div>
<div class="a" style="left:1170px;top:0;width:1px;height:31px;background:#e0e0e0;"></div>
<div class="a " style="left:1171px;top:5px;width:95px;text-align:right;font-size:14px;line-height:20px;white-space:nowrap;">275.17</div>
<div class="a" style="left:1276px;top:0;width:1px;height:31px;background:#e0e0e0;"></div>
<div class="a g" style="left:1277px;top:5px;width:95px;text-align:right;font-size:14px;line-height:20px;white-space:nowrap;">299.84</div>
<div class="a" style="left:1382px;top:0;width:1px;height:31px;background:#e0e0e0;"></div>
<div class="a " style="left:1383px;top:5px;width:95px;text-align:right;font-size:14px;line-height:20px;white-space:nowrap;">318.76</div>
<div class="a" style="left:1488px;top:0;width:1px;height:31px;background:#e0e0e0;"></div>
<div class="a g" style="left:1489px;top:5px;width:95px;text-align:right;font-size:14px;line-height:20px;white-space:nowrap;">289.32</div>
<div class="a" style="left:1594px;top:0;width:1px;height:31px;background:#e0e0e0;"></div>
<div class="a " style="left:1595px;top:5px;width:95px;text-align:right;font-size:14px;line-height:20px;white-space:nowrap;">124,032.60</div>
<div class="a" style="left:1700px;top:0;width:1px;height:31px;background:#e0e0e0;"></div>
<div class="a " style="left:1701px;top:5px;width:95px;text-align:right;font-size:14px;line-height:20px;white-space:nowrap;">15,409.60</div>
</div>
<div class="a" style="left:0;top:93px;width:1805px;height:31px;">
<div class="a" style="left:0;top:30px;width:1805px;height:1px;background:#dcdcdc;"></div>
<svg class="a" style="left:42px;top:11px" width="6" height="9"><path d="M0.5 0V8.5L5 4.25Z" fill="#111"/></svg>
<div class="a" style="left:57.5px;top:5px;font-size:14px;line-height:20px;white-space:nowrap;color:#333;letter-spacing:0.25px;">COMP</div>
<div class="a" style="left:322px;top:0;width:1px;height:31px;background:#e0e0e0;"></div>
<div class="a " style="left:323px;top:5px;width:95px;text-align:right;font-size:14px;line-height:20px;white-space:nowrap;">6</div>
<div class="a" style="left:428px;top:0;width:1px;height:31px;background:#e0e0e0;"></div>
<div class="a " style="left:429px;top:5px;width:95px;text-align:right;font-size:14px;line-height:20px;white-space:nowrap;">1</div>
<div class="a" style="left:534px;top:0;width:1px;height:31px;background:#e0e0e0;"></div>
<div class="a g" style="left:535px;top:5px;width:95px;text-align:right;font-size:14px;line-height:20px;white-space:nowrap;">1</div>
<div class="a" style="left:640px;top:0;width:1px;height:31px;background:#e0e0e0;"></div>
<div class="a " style="left:641px;top:5px;width:95px;text-align:right;font-size:14px;line-height:20px;white-space:nowrap;">--</div>
<div class="a" style="left:746px;top:0;width:1px;height:31px;background:#e0e0e0;"></div>
<div class="a b" style="left:747px;top:6px;width:100px;text-align:right;font-size:14px;line-height:20px;white-space:nowrap;">0.00</div>
<div class="a" style="left:852px;top:0;width:1px;height:31px;background:#e0e0e0;"></div>
<div class="a " style="left:853px;top:5px;width:95px;text-align:right;font-size:14px;line-height:20px;white-space:nowrap;">5.0</div>
<div class="a" style="left:958px;top:0;width:1px;height:31px;background:#e0e0e0;"></div>
<div class="a g" style="left:959px;top:5px;width:95px;text-align:right;font-size:14px;line-height:20px;white-space:nowrap;">5</div>
<div class="a" style="left:1064px;top:0;width:1px;height:31px;background:#e0e0e0;"></div>
<div class="a " style="left:1065px;top:5px;width:95px;text-align:right;font-size:14px;line-height:20px;white-space:nowrap;">0.00</div>
<div class="a" style="left:1170px;top:0;width:1px;height:31px;background:#e0e0e0;"></div>
<div class="a " style="left:1171px;top:5px;width:95px;text-align:right;font-size:14px;line-height:20px;white-space:nowrap;">0.00</div>
<div class="a" style="left:1276px;top:0;width:1px;height:31px;background:#e0e0e0;"></div>
<div class="a g" style="left:1277px;top:5px;width:95px;text-align:right;font-size:14px;line-height:20px;white-space:nowrap;">1.00</div>
<div class="a" style="left:1382px;top:0;width:1px;height:31px;background:#e0e0e0;"></div>
<div class="a " style="left:1383px;top:5px;width:95px;text-align:right;font-size:14px;line-height:20px;white-space:nowrap;">0.00</div>
<div class="a" style="left:1488px;top:0;width:1px;height:31px;background:#e0e0e0;"></div>
<div class="a g" style="left:1489px;top:5px;width:95px;text-align:right;font-size:14px;line-height:20px;white-space:nowrap;">0.20</div>
<div class="a" style="left:1594px;top:0;width:1px;height:31px;background:#e0e0e0;"></div>
<div class="a " style="left:1595px;top:5px;width:95px;text-align:right;font-size:14px;line-height:20px;white-space:nowrap;">0.00</div>
<div class="a" style="left:1700px;top:0;width:1px;height:31px;background:#e0e0e0;"></div>
<div class="a " style="left:1701px;top:5px;width:95px;text-align:right;font-size:14px;line-height:20px;white-space:nowrap;">0.00</div>
</div>
<div class="a" style="left:0;top:124px;width:1805px;height:31px;">
<div class="a" style="left:0;top:30px;width:1805px;height:1px;background:#dcdcdc;"></div>
<svg class="a" style="left:42px;top:11px" width="6" height="9"><path d="M0.5 0V8.5L5 4.25Z" fill="#111"/></svg>
<div class="a" style="left:57.5px;top:5px;font-size:14px;line-height:20px;white-space:nowrap;color:#333;letter-spacing:0.25px;">QUAL block non-yield</div>
<div class="a" style="left:322px;top:0;width:1px;height:31px;background:#e0e0e0;"></div>
<div class="a " style="left:323px;top:5px;width:95px;text-align:right;font-size:14px;line-height:20px;white-space:nowrap;">66</div>
<div class="a" style="left:428px;top:0;width:1px;height:31px;background:#e0e0e0;"></div>
<div class="a " style="left:429px;top:5px;width:95px;text-align:right;font-size:14px;line-height:20px;white-space:nowrap;">0</div>
<div class="a" style="left:534px;top:0;width:1px;height:31px;background:#e0e0e0;"></div>
<div class="a g" style="left:535px;top:5px;width:95px;text-align:right;font-size:14px;line-height:20px;white-space:nowrap;">--</div>
<div class="a" style="left:640px;top:0;width:1px;height:31px;background:#e0e0e0;"></div>
<div class="a " style="left:641px;top:5px;width:95px;text-align:right;font-size:14px;line-height:20px;white-space:nowrap;">0.00</div>
<div class="a" style="left:746px;top:0;width:1px;height:31px;background:#e0e0e0;"></div>
<div class="a b" style="left:747px;top:6px;width:100px;text-align:right;font-size:14px;line-height:20px;white-space:nowrap;">0.00</div>
<div class="a" style="left:852px;top:0;width:1px;height:31px;background:#e0e0e0;"></div>
<div class="a " style="left:853px;top:5px;width:95px;text-align:right;font-size:14px;line-height:20px;white-space:nowrap;">62.9</div>
<div class="a" style="left:958px;top:0;width:1px;height:31px;background:#e0e0e0;"></div>
<div class="a g" style="left:959px;top:5px;width:95px;text-align:right;font-size:14px;line-height:20px;white-space:nowrap;">0</div>
<div class="a" style="left:1064px;top:0;width:1px;height:31px;background:#e0e0e0;"></div>
<div class="a " style="left:1065px;top:5px;width:95px;text-align:right;font-size:14px;line-height:20px;white-space:nowrap;">179.00</div>
<div class="a" style="left:1170px;top:0;width:1px;height:31px;background:#e0e0e0;"></div>
<div class="a " style="left:1171px;top:5px;width:95px;text-align:right;font-size:14px;line-height:20px;white-space:nowrap;">0.00</div>
<div class="a" style="left:1276px;top:0;width:1px;height:31px;background:#e0e0e0;"></div>
<div class="a g" style="left:1277px;top:5px;width:95px;text-align:right;font-size:14px;line-height:20px;white-space:nowrap;">--</div>
<div class="a" style="left:1382px;top:0;width:1px;height:31px;background:#e0e0e0;"></div>
<div class="a " style="left:1383px;top:5px;width:95px;text-align:right;font-size:14px;line-height:20px;white-space:nowrap;">179.00</div>
<div class="a" style="left:1488px;top:0;width:1px;height:31px;background:#e0e0e0;"></div>
<div class="a g" style="left:1489px;top:5px;width:95px;text-align:right;font-size:14px;line-height:20px;white-space:nowrap;">0.00</div>
<div class="a" style="left:1594px;top:0;width:1px;height:31px;background:#e0e0e0;"></div>
<div class="a " style="left:1595px;top:5px;width:95px;text-align:right;font-size:14px;line-height:20px;white-space:nowrap;">11,814.00</div>
<div class="a" style="left:1700px;top:0;width:1px;height:31px;background:#e0e0e0;"></div>
<div class="a " style="left:1701px;top:5px;width:95px;text-align:right;font-size:14px;line-height:20px;white-space:nowrap;">0.00</div>
</div>
<div class="a" style="left:0;top:155px;width:1805px;height:31px;">
<div class="a" style="left:0;top:30px;width:1805px;height:1px;background:#dcdcdc;"></div>
<svg class="a" style="left:42px;top:11px" width="6" height="9"><path d="M0.5 0V8.5L5 4.25Z" fill="#111"/></svg>
<div class="a" style="left:57.5px;top:5px;font-size:14px;line-height:20px;white-space:nowrap;color:#333;letter-spacing:0.25px;">QUAL non-yield linked</div>
<div class="a" style="left:322px;top:0;width:1px;height:31px;background:#e0e0e0;"></div>
<div class="a " style="left:323px;top:5px;width:95px;text-align:right;font-size:14px;line-height:20px;white-space:nowrap;">21</div>
<div class="a" style="left:428px;top:0;width:1px;height:31px;background:#e0e0e0;"></div>
<div class="a " style="left:429px;top:5px;width:95px;text-align:right;font-size:14px;line-height:20px;white-space:nowrap;">0</div>
<div class="a" style="left:534px;top:0;width:1px;height:31px;background:#e0e0e0;"></div>
<div class="a g" style="left:535px;top:5px;width:95px;text-align:right;font-size:14px;line-height:20px;white-space:nowrap;">8</div>
<div class="a" style="left:640px;top:0;width:1px;height:31px;background:#e0e0e0;"></div>
<div class="a " style="left:641px;top:5px;width:95px;text-align:right;font-size:14px;line-height:20px;white-space:nowrap;">0.57</div>
<div class="a" style="left:746px;top:0;width:1px;height:31px;background:#e0e0e0;"></div>
<div class="a b" style="left:747px;top:6px;width:100px;text-align:right;font-size:14px;line-height:20px;white-space:nowrap;">0.57</div>
<div class="a" style="left:852px;top:0;width:1px;height:31px;background:#e0e0e0;"></div>
<div class="a " style="left:853px;top:5px;width:95px;text-align:right;font-size:14px;line-height:20px;white-space:nowrap;">20.0</div>
<div class="a" style="left:958px;top:0;width:1px;height:31px;background:#e0e0e0;"></div>
<div class="a g" style="left:959px;top:5px;width:95px;text-align:right;font-size:14px;line-height:20px;white-space:nowrap;">8</div>
<div class="a" style="left:1064px;top:0;width:1px;height:31px;background:#e0e0e0;"></div>
<div class="a " style="left:1065px;top:5px;width:95px;text-align:right;font-size:14px;line-height:20px;white-space:nowrap;">63.32</div>
<div class="a" style="left:1170px;top:0;width:1px;height:31px;background:#e0e0e0;"></div>
<div class="a " style="left:1171px;top:5px;width:95px;text-align:right;font-size:14px;line-height:20px;white-space:nowrap;">0.00</div>
<div class="a" style="left:1276px;top:0;width:1px;height:31px;background:#e0e0e0;"></div>
<div class="a g" style="left:1277px;top:5px;width:95px;text-align:right;font-size:14px;line-height:20px;white-space:nowrap;">39.00</div>
<div class="a" style="left:1382px;top:0;width:1px;height:31px;background:#e0e0e0;"></div>
<div class="a " style="left:1383px;top:5px;width:95px;text-align:right;font-size:14px;line-height:20px;white-space:nowrap;">62.63</div>
<div class="a" style="left:1488px;top:0;width:1px;height:31px;background:#e0e0e0;"></div>
<div class="a g" style="left:1489px;top:5px;width:95px;text-align:right;font-size:14px;line-height:20px;white-space:nowrap;">39.00</div>
<div class="a" style="left:1594px;top:0;width:1px;height:31px;background:#e0e0e0;"></div>
<div class="a " style="left:1595px;top:5px;width:95px;text-align:right;font-size:14px;line-height:20px;white-space:nowrap;">1,329.75</div>
<div class="a" style="left:1700px;top:0;width:1px;height:31px;background:#e0e0e0;"></div>
<div class="a " style="left:1701px;top:5px;width:95px;text-align:right;font-size:14px;line-height:20px;white-space:nowrap;">0.00</div>
</div>
<div class="a" style="left:0;top:186px;width:1805px;height:31px;">
<div class="a" style="left:0;top:30px;width:1805px;height:1px;background:#dcdcdc;"></div>
<svg class="a" style="left:42px;top:11px" width="6" height="9"><path d="M0.5 0V8.5L5 4.25Z" fill="#111"/></svg>
<div class="a" style="left:57.5px;top:5px;font-size:14px;line-height:20px;white-space:nowrap;color:#333;letter-spacing:0.25px;">QUAL non-yield not-linked</div>
<div class="a" style="left:322px;top:0;width:1px;height:31px;background:#e0e0e0;"></div>
<div class="a " style="left:323px;top:5px;width:95px;text-align:right;font-size:14px;line-height:20px;white-space:nowrap;">39</div>
<div class="a" style="left:428px;top:0;width:1px;height:31px;background:#e0e0e0;"></div>
<div class="a " style="left:429px;top:5px;width:95px;text-align:right;font-size:14px;line-height:20px;white-space:nowrap;">-1</div>
<div class="a" style="left:534px;top:0;width:1px;height:31px;background:#e0e0e0;"></div>
<div class="a g" style="left:535px;top:5px;width:95px;text-align:right;font-size:14px;line-height:20px;white-space:nowrap;">19</div>
<div class="a" style="left:640px;top:0;width:1px;height:31px;background:#e0e0e0;"></div>
<div class="a " style="left:641px;top:5px;width:95px;text-align:right;font-size:14px;line-height:20px;white-space:nowrap;">2.79</div>
<div class="a" style="left:746px;top:0;width:1px;height:31px;background:#e0e0e0;"></div>
<div class="a b" style="left:747px;top:6px;width:100px;text-align:right;font-size:14px;line-height:20px;white-space:nowrap;">2.79</div>
<div class="a" style="left:852px;top:0;width:1px;height:31px;background:#e0e0e0;"></div>
<div class="a " style="left:853px;top:5px;width:95px;text-align:right;font-size:14px;line-height:20px;white-space:nowrap;">41.0</div>
<div class="a" style="left:958px;top:0;width:1px;height:31px;background:#e0e0e0;"></div>
<div class="a g" style="left:959px;top:5px;width:95px;text-align:right;font-size:14px;line-height:20px;white-space:nowrap;">22</div>
<div class="a" style="left:1064px;top:0;width:1px;height:31px;background:#e0e0e0;"></div>
<div class="a " style="left:1065px;top:5px;width:95px;text-align:right;font-size:14px;line-height:20px;white-space:nowrap;">20.00</div>
<div class="a" style="left:1170px;top:0;width:1px;height:31px;background:#e0e0e0;"></div>
<div class="a " style="left:1171px;top:5px;width:95px;text-align:right;font-size:14px;line-height:20px;white-space:nowrap;">20.00</div>
<div class="a" style="left:1276px;top:0;width:1px;height:31px;background:#e0e0e0;"></div>
<div class="a g" style="left:1277px;top:5px;width:95px;text-align:right;font-size:14px;line-height:20px;white-space:nowrap;">20.00</div>
<div class="a" style="left:1382px;top:0;width:1px;height:31px;background:#e0e0e0;"></div>
<div class="a " style="left:1383px;top:5px;width:95px;text-align:right;font-size:14px;line-height:20px;white-space:nowrap;">20.02</div>
<div class="a" style="left:1488px;top:0;width:1px;height:31px;background:#e0e0e0;"></div>
<div class="a g" style="left:1489px;top:5px;width:95px;text-align:right;font-size:14px;line-height:20px;white-space:nowrap;">20.00</div>
<div class="a" style="left:1594px;top:0;width:1px;height:31px;background:#e0e0e0;"></div>
<div class="a " style="left:1595px;top:5px;width:95px;text-align:right;font-size:14px;line-height:20px;white-space:nowrap;">780.00</div>
<div class="a" style="left:1700px;top:0;width:1px;height:31px;background:#e0e0e0;"></div>
<div class="a " style="left:1701px;top:5px;width:95px;text-align:right;font-size:14px;line-height:20px;white-space:nowrap;">-20.00</div>
</div>
<div class="a" style="left:0;top:217px;width:1805px;height:31px;">
<div class="a" style="left:0;top:30px;width:1805px;height:1px;background:#dcdcdc;"></div>
<svg class="a" style="left:42px;top:11px" width="6" height="9"><path d="M0.5 0V8.5L5 4.25Z" fill="#111"/></svg>
<div class="a" style="left:57.5px;top:5px;font-size:14px;line-height:20px;white-space:nowrap;color:#333;letter-spacing:0.25px;">QUAL semi-yield linked 1</div>
<div class="a" style="left:322px;top:0;width:1px;height:31px;background:#e0e0e0;"></div>
<div class="a " style="left:323px;top:5px;width:95px;text-align:right;font-size:14px;line-height:20px;white-space:nowrap;">49</div>
<div class="a" style="left:428px;top:0;width:1px;height:31px;background:#e0e0e0;"></div>
<div class="a " style="left:429px;top:5px;width:95px;text-align:right;font-size:14px;line-height:20px;white-space:nowrap;">4</div>
<div class="a" style="left:534px;top:0;width:1px;height:31px;background:#e0e0e0;"></div>
<div class="a g" style="left:535px;top:5px;width:95px;text-align:right;font-size:14px;line-height:20px;white-space:nowrap;">143</div>
<div class="a" style="left:640px;top:0;width:1px;height:31px;background:#e0e0e0;"></div>
<div class="a " style="left:641px;top:5px;width:95px;text-align:right;font-size:14px;line-height:20px;white-space:nowrap;">6.64</div>
<div class="a" style="left:746px;top:0;width:1px;height:31px;background:#e0e0e0;"></div>
<div class="a b" style="left:747px;top:6px;width:100px;text-align:right;font-size:14px;line-height:20px;white-space:nowrap;">6.64</div>
<div class="a" style="left:852px;top:0;width:1px;height:31px;background:#e0e0e0;"></div>
<div class="a " style="left:853px;top:5px;width:95px;text-align:right;font-size:14px;line-height:20px;white-space:nowrap;">48.1</div>
<div class="a" style="left:958px;top:0;width:1px;height:31px;background:#e0e0e0;"></div>
<div class="a g" style="left:959px;top:5px;width:95px;text-align:right;font-size:14px;line-height:20px;white-space:nowrap;">134</div>
<div class="a" style="left:1064px;top:0;width:1px;height:31px;background:#e0e0e0;"></div>
<div class="a " style="left:1065px;top:5px;width:95px;text-align:right;font-size:14px;line-height:20px;white-space:nowrap;">244.03</div>
<div class="a" style="left:1170px;top:0;width:1px;height:31px;background:#e0e0e0;"></div>
<div class="a " style="left:1171px;top:5px;width:95px;text-align:right;font-size:14px;line-height:20px;white-space:nowrap;">166.50</div>
<div class="a" style="left:1276px;top:0;width:1px;height:31px;background:#e0e0e0;"></div>
<div class="a g" style="left:1277px;top:5px;width:95px;text-align:right;font-size:14px;line-height:20px;white-space:nowrap;">200.99</div>
<div class="a" style="left:1382px;top:0;width:1px;height:31px;background:#e0e0e0;"></div>
<div class="a " style="left:1383px;top:5px;width:95px;text-align:right;font-size:14px;line-height:20px;white-space:nowrap;">241.73</div>
<div class="a" style="left:1488px;top:0;width:1px;height:31px;background:#e0e0e0;"></div>
<div class="a g" style="left:1489px;top:5px;width:95px;text-align:right;font-size:14px;line-height:20px;white-space:nowrap;">201.13</div>
<div class="a" style="left:1594px;top:0;width:1px;height:31px;background:#e0e0e0;"></div>
<div class="a " style="left:1595px;top:5px;width:95px;text-align:right;font-size:14px;line-height:20px;white-space:nowrap;">11,957.30</div>
<div class="a" style="left:1700px;top:0;width:1px;height:31px;background:#e0e0e0;"></div>
<div class="a " style="left:1701px;top:5px;width:95px;text-align:right;font-size:14px;line-height:20px;white-space:nowrap;">666.00</div>
</div>
<div class="a" style="left:0;top:248px;width:1805px;height:31px;">
<div class="a" style="left:0;top:30px;width:1805px;height:1px;background:#dcdcdc;"></div>
<svg class="a" style="left:42px;top:11px" width="6" height="9"><path d="M0.5 0V8.5L5 4.25Z" fill="#111"/></svg>
<div class="a" style="left:57.5px;top:5px;font-size:14px;line-height:20px;white-space:nowrap;color:#333;letter-spacing:0.25px;">QUAL semi-yield linked 2</div>
<div class="a" style="left:322px;top:0;width:1px;height:31px;background:#e0e0e0;"></div>
<div class="a " style="left:323px;top:5px;width:95px;text-align:right;font-size:14px;line-height:20px;white-space:nowrap;">130</div>
<div class="a" style="left:428px;top:0;width:1px;height:31px;background:#e0e0e0;"></div>
<div class="a " style="left:429px;top:5px;width:95px;text-align:right;font-size:14px;line-height:20px;white-space:nowrap;">3</div>
<div class="a" style="left:534px;top:0;width:1px;height:31px;background:#e0e0e0;"></div>
<div class="a g" style="left:535px;top:5px;width:95px;text-align:right;font-size:14px;line-height:20px;white-space:nowrap;">87</div>
<div class="a" style="left:640px;top:0;width:1px;height:31px;background:#e0e0e0;"></div>
<div class="a " style="left:641px;top:5px;width:95px;text-align:right;font-size:14px;line-height:20px;white-space:nowrap;">3.43</div>
<div class="a" style="left:746px;top:0;width:1px;height:31px;background:#e0e0e0;"></div>
<div class="a b" style="left:747px;top:6px;width:100px;text-align:right;font-size:14px;line-height:20px;white-space:nowrap;">3.43</div>
<div class="a" style="left:852px;top:0;width:1px;height:31px;background:#e0e0e0;"></div>
<div class="a " style="left:853px;top:5px;width:95px;text-align:right;font-size:14px;line-height:20px;white-space:nowrap;">130.0</div>
<div class="a" style="left:958px;top:0;width:1px;height:31px;background:#e0e0e0;"></div>
<div class="a g" style="left:959px;top:5px;width:95px;text-align:right;font-size:14px;line-height:20px;white-space:nowrap;">83</div>
<div class="a" style="left:1064px;top:0;width:1px;height:31px;background:#e0e0e0;"></div>
<div class="a " style="left:1065px;top:5px;width:95px;text-align:right;font-size:14px;line-height:20px;white-space:nowrap;">172.50</div>
<div class="a" style="left:1170px;top:0;width:1px;height:31px;background:#e0e0e0;"></div>
<div class="a " style="left:1171px;top:5px;width:95px;text-align:right;font-size:14px;line-height:20px;white-space:nowrap;">243.33</div>
<div class="a" style="left:1276px;top:0;width:1px;height:31px;background:#e0e0e0;"></div>
<div class="a g" style="left:1277px;top:5px;width:95px;text-align:right;font-size:14px;line-height:20px;white-space:nowrap;">151.99</div>
<div class="a" style="left:1382px;top:0;width:1px;height:31px;background:#e0e0e0;"></div>
<div class="a " style="left:1383px;top:5px;width:95px;text-align:right;font-size:14px;line-height:20px;white-space:nowrap;">171.87</div>
<div class="a" style="left:1488px;top:0;width:1px;height:31px;background:#e0e0e0;"></div>
<div class="a g" style="left:1489px;top:5px;width:95px;text-align:right;font-size:14px;line-height:20px;white-space:nowrap;">149.54</div>
<div class="a" style="left:1594px;top:0;width:1px;height:31px;background:#e0e0e0;"></div>
<div class="a " style="left:1595px;top:5px;width:95px;text-align:right;font-size:14px;line-height:20px;white-space:nowrap;">22,424.77</div>
<div class="a" style="left:1700px;top:0;width:1px;height:31px;background:#e0e0e0;"></div>
<div class="a " style="left:1701px;top:5px;width:95px;text-align:right;font-size:14px;line-height:20px;white-space:nowrap;">730.00</div>
</div>
<div class="a" style="left:0;top:279px;width:1805px;height:31px;">
<div class="a" style="left:0;top:30px;width:1805px;height:1px;background:#dcdcdc;"></div>
<svg class="a" style="left:42px;top:11px" width="6" height="9"><path d="M0.5 0V8.5L5 4.25Z" fill="#111"/></svg>
<div class="a" style="left:57.5px;top:5px;font-size:14px;line-height:20px;white-space:nowrap;color:#333;letter-spacing:0.25px;">QUAL semi-yield not-linked</div>
<div class="a" style="left:322px;top:0;width:1px;height:31px;background:#e0e0e0;"></div>
<div class="a " style="left:323px;top:5px;width:95px;text-align:right;font-size:14px;line-height:20px;white-space:nowrap;">94</div>
<div class="a" style="left:428px;top:0;width:1px;height:31px;background:#e0e0e0;"></div>
<div class="a " style="left:429px;top:5px;width:95px;text-align:right;font-size:14px;line-height:20px;white-space:nowrap;">2</div>
<div class="a" style="left:534px;top:0;width:1px;height:31px;background:#e0e0e0;"></div>
<div class="a g" style="left:535px;top:5px;width:95px;text-align:right;font-size:14px;line-height:20px;white-space:nowrap;">47</div>
<div class="a" style="left:640px;top:0;width:1px;height:31px;background:#e0e0e0;"></div>
<div class="a " style="left:641px;top:5px;width:95px;text-align:right;font-size:14px;line-height:20px;white-space:nowrap;">11.44</div>
<div class="a" style="left:746px;top:0;width:1px;height:31px;background:#e0e0e0;"></div>
<div class="a b" style="left:747px;top:6px;width:100px;text-align:right;font-size:14px;line-height:20px;white-space:nowrap;">11.44</div>
<div class="a" style="left:852px;top:0;width:1px;height:31px;background:#e0e0e0;"></div>
<div class="a " style="left:853px;top:5px;width:95px;text-align:right;font-size:14px;line-height:20px;white-space:nowrap;">94.0</div>
<div class="a" style="left:958px;top:0;width:1px;height:31px;background:#e0e0e0;"></div>
<div class="a g" style="left:959px;top:5px;width:95px;text-align:right;font-size:14px;line-height:20px;white-space:nowrap;">51</div>
<div class="a" style="left:1064px;top:0;width:1px;height:31px;background:#e0e0e0;"></div>
<div class="a " style="left:1065px;top:5px;width:95px;text-align:right;font-size:14px;line-height:20px;white-space:nowrap;">20.00</div>
<div class="a" style="left:1170px;top:0;width:1px;height:31px;background:#e0e0e0;"></div>
<div class="a " style="left:1171px;top:5px;width:95px;text-align:right;font-size:14px;line-height:20px;white-space:nowrap;">20.00</div>
<div class="a" style="left:1276px;top:0;width:1px;height:31px;background:#e0e0e0;"></div>
<div class="a g" style="left:1277px;top:5px;width:95px;text-align:right;font-size:14px;line-height:20px;white-space:nowrap;">44.60</div>
<div class="a" style="left:1382px;top:0;width:1px;height:31px;background:#e0e0e0;"></div>
<div class="a " style="left:1383px;top:5px;width:95px;text-align:right;font-size:14px;line-height:20px;white-space:nowrap;">23.57</div>
<div class="a" style="left:1488px;top:0;width:1px;height:31px;background:#e0e0e0;"></div>
<div class="a g" style="left:1489px;top:5px;width:95px;text-align:right;font-size:14px;line-height:20px;white-space:nowrap;">42.67</div>
<div class="a" style="left:1594px;top:0;width:1px;height:31px;background:#e0e0e0;"></div>
<div class="a " style="left:1595px;top:5px;width:95px;text-align:right;font-size:14px;line-height:20px;white-space:nowrap;">1,880.00</div>
<div class="a" style="left:1700px;top:0;width:1px;height:31px;background:#e0e0e0;"></div>
<div class="a " style="left:1701px;top:5px;width:95px;text-align:right;font-size:14px;line-height:20px;white-space:nowrap;">40.00</div>
</div>
<div class="a" style="left:0;top:310px;width:1805px;height:31px;">
<div class="a" style="left:0;top:30px;width:1805px;height:1px;background:#dcdcdc;"></div>
<svg class="a" style="left:42px;top:11px" width="6" height="9"><path d="M0.5 0V8.5L5 4.25Z" fill="#111"/></svg>
<div class="a" style="left:57.5px;top:5px;font-size:14px;line-height:20px;white-space:nowrap;color:#333;letter-spacing:0.25px;">QUAL yieldable linked</div>
<div class="a" style="left:322px;top:0;width:1px;height:31px;background:#e0e0e0;"></div>
<div class="a " style="left:323px;top:5px;width:95px;text-align:right;font-size:14px;line-height:20px;white-space:nowrap;">195</div>
<div class="a" style="left:428px;top:0;width:1px;height:31px;background:#e0e0e0;"></div>
<div class="a " style="left:429px;top:5px;width:95px;text-align:right;font-size:14px;line-height:20px;white-space:nowrap;">29</div>
<div class="a" style="left:534px;top:0;width:1px;height:31px;background:#e0e0e0;"></div>
<div class="a g" style="left:535px;top:5px;width:95px;text-align:right;font-size:14px;line-height:20px;white-space:nowrap;">172</div>
<div class="a" style="left:640px;top:0;width:1px;height:31px;background:#e0e0e0;"></div>
<div class="a " style="left:641px;top:5px;width:95px;text-align:right;font-size:14px;line-height:20px;white-space:nowrap;">14.41</div>
<div class="a" style="left:746px;top:0;width:1px;height:31px;background:#e0e0e0;"></div>
<div class="a b" style="left:747px;top:6px;width:100px;text-align:right;font-size:14px;line-height:20px;white-space:nowrap;">14.41</div>
<div class="a" style="left:852px;top:0;width:1px;height:31px;background:#e0e0e0;"></div>
<div class="a " style="left:853px;top:5px;width:95px;text-align:right;font-size:14px;line-height:20px;white-space:nowrap;">192.0</div>
<div class="a" style="left:958px;top:0;width:1px;height:31px;background:#e0e0e0;"></div>
<div class="a g" style="left:959px;top:5px;width:95px;text-align:right;font-size:14px;line-height:20px;white-space:nowrap;">176</div>
<div class="a" style="left:1064px;top:0;width:1px;height:31px;background:#e0e0e0;"></div>
<div class="a " style="left:1065px;top:5px;width:95px;text-align:right;font-size:14px;line-height:20px;white-space:nowrap;">223.35</div>
<div class="a" style="left:1170px;top:0;width:1px;height:31px;background:#e0e0e0;"></div>
<div class="a " style="left:1171px;top:5px;width:95px;text-align:right;font-size:14px;line-height:20px;white-space:nowrap;">188.82</div>
<div class="a" style="left:1276px;top:0;width:1px;height:31px;background:#e0e0e0;"></div>
<div class="a g" style="left:1277px;top:5px;width:95px;text-align:right;font-size:14px;line-height:20px;white-space:nowrap;">244.49</div>
<div class="a" style="left:1382px;top:0;width:1px;height:31px;background:#e0e0e0;"></div>
<div class="a " style="left:1383px;top:5px;width:95px;text-align:right;font-size:14px;line-height:20px;white-space:nowrap;">225.17</div>
<div class="a" style="left:1488px;top:0;width:1px;height:31px;background:#e0e0e0;"></div>
<div class="a g" style="left:1489px;top:5px;width:95px;text-align:right;font-size:14px;line-height:20px;white-space:nowrap;">235.88</div>
<div class="a" style="left:1594px;top:0;width:1px;height:31px;background:#e0e0e0;"></div>
<div class="a " style="left:1595px;top:5px;width:95px;text-align:right;font-size:14px;line-height:20px;white-space:nowrap;">43,552.92</div>
<div class="a" style="left:1700px;top:0;width:1px;height:31px;background:#e0e0e0;"></div>
<div class="a " style="left:1701px;top:5px;width:95px;text-align:right;font-size:14px;line-height:20px;white-space:nowrap;">5,475.80</div>
</div>
<div class="a" style="left:0;top:341px;width:1805px;height:31px;">
<div class="a" style="left:0;top:30px;width:1805px;height:1px;background:#dcdcdc;"></div>
<svg class="a" style="left:42px;top:11px" width="6" height="9"><path d="M0.5 0V8.5L5 4.25Z" fill="#111"/></svg>
<div class="a" style="left:57.5px;top:5px;font-size:14px;line-height:20px;white-space:nowrap;color:#333;letter-spacing:0.25px;">QUAL yieldable not-linked</div>
<div class="a" style="left:322px;top:0;width:1px;height:31px;background:#e0e0e0;"></div>
<div class="a " style="left:323px;top:5px;width:95px;text-align:right;font-size:14px;line-height:20px;white-space:nowrap;">27</div>
<div class="a" style="left:428px;top:0;width:1px;height:31px;background:#e0e0e0;"></div>
<div class="a " style="left:429px;top:5px;width:95px;text-align:right;font-size:14px;line-height:20px;white-space:nowrap;">3</div>
<div class="a" style="left:534px;top:0;width:1px;height:31px;background:#e0e0e0;"></div>
<div class="a g" style="left:535px;top:5px;width:95px;text-align:right;font-size:14px;line-height:20px;white-space:nowrap;">91</div>
<div class="a" style="left:640px;top:0;width:1px;height:31px;background:#e0e0e0;"></div>
<div class="a " style="left:641px;top:5px;width:95px;text-align:right;font-size:14px;line-height:20px;white-space:nowrap;">4.68</div>
<div class="a" style="left:746px;top:0;width:1px;height:31px;background:#e0e0e0;"></div>
<div class="a b" style="left:747px;top:6px;width:100px;text-align:right;font-size:14px;line-height:20px;white-space:nowrap;">4.68</div>
<div class="a" style="left:852px;top:0;width:1px;height:31px;background:#e0e0e0;"></div>
<div class="a " style="left:853px;top:5px;width:95px;text-align:right;font-size:14px;line-height:20px;white-space:nowrap;">28.4</div>
<div class="a" style="left:958px;top:0;width:1px;height:31px;background:#e0e0e0;"></div>
<div class="a g" style="left:959px;top:5px;width:95px;text-align:right;font-size:14px;line-height:20px;white-space:nowrap;">87</div>
<div class="a" style="left:1064px;top:0;width:1px;height:31px;background:#e0e0e0;"></div>
<div class="a " style="left:1065px;top:5px;width:95px;text-align:right;font-size:14px;line-height:20px;white-space:nowrap;">185.01</div>
<div class="a" style="left:1170px;top:0;width:1px;height:31px;background:#e0e0e0;"></div>
<div class="a " style="left:1171px;top:5px;width:95px;text-align:right;font-size:14px;line-height:20px;white-space:nowrap;">19.52</div>
<div class="a" style="left:1276px;top:0;width:1px;height:31px;background:#e0e0e0;"></div>
<div class="a g" style="left:1277px;top:5px;width:95px;text-align:right;font-size:14px;line-height:20px;white-space:nowrap;">155.86</div>
<div class="a" style="left:1382px;top:0;width:1px;height:31px;background:#e0e0e0;"></div>
<div class="a " style="left:1383px;top:5px;width:95px;text-align:right;font-size:14px;line-height:20px;white-space:nowrap;">184.31</div>
<div class="a" style="left:1488px;top:0;width:1px;height:31px;background:#e0e0e0;"></div>
<div class="a g" style="left:1489px;top:5px;width:95px;text-align:right;font-size:14px;line-height:20px;white-space:nowrap;">151.38</div>
<div class="a" style="left:1594px;top:0;width:1px;height:31px;background:#e0e0e0;"></div>
<div class="a " style="left:1595px;top:5px;width:95px;text-align:right;font-size:14px;line-height:20px;white-space:nowrap;">4,995.22</div>
<div class="a" style="left:1700px;top:0;width:1px;height:31px;background:#e0e0e0;"></div>
<div class="a " style="left:1701px;top:5px;width:95px;text-align:right;font-size:14px;line-height:20px;white-space:nowrap;">58.50</div>
</div>
<div class="a" style="left:0;top:372px;width:1805px;height:31px;">
<div class="a" style="left:0;top:30px;width:1805px;height:1px;background:#dcdcdc;"></div>
<svg class="a" style="left:42px;top:11px" width="6" height="9"><path d="M0.5 0V8.5L5 4.25Z" fill="#111"/></svg>
<div class="a" style="left:57.5px;top:5px;font-size:14px;line-height:20px;white-space:nowrap;color:#333;letter-spacing:0.25px;">UNQUAL fenced</div>
<div class="a" style="left:322px;top:0;width:1px;height:31px;background:#e0e0e0;"></div>
<div class="a " style="left:323px;top:5px;width:95px;text-align:right;font-size:14px;line-height:20px;white-space:nowrap;">171</div>
<div class="a" style="left:428px;top:0;width:1px;height:31px;background:#e0e0e0;"></div>
<div class="a " style="left:429px;top:5px;width:95px;text-align:right;font-size:14px;line-height:20px;white-space:nowrap;">30</div>
<div class="a" style="left:534px;top:0;width:1px;height:31px;background:#e0e0e0;"></div>
<div class="a g" style="left:535px;top:5px;width:95px;text-align:right;font-size:14px;line-height:20px;white-space:nowrap;">156</div>
<div class="a" style="left:640px;top:0;width:1px;height:31px;background:#e0e0e0;"></div>
<div class="a " style="left:641px;top:5px;width:95px;text-align:right;font-size:14px;line-height:20px;white-space:nowrap;">12.67</div>
<div class="a" style="left:746px;top:0;width:1px;height:31px;background:#e0e0e0;"></div>
<div class="a b" style="left:747px;top:6px;width:100px;text-align:right;font-size:14px;line-height:20px;white-space:nowrap;">12.67</div>
<div class="a" style="left:852px;top:0;width:1px;height:31px;background:#e0e0e0;"></div>
<div class="a " style="left:853px;top:5px;width:95px;text-align:right;font-size:14px;line-height:20px;white-space:nowrap;">177.0</div>
<div class="a" style="left:958px;top:0;width:1px;height:31px;background:#e0e0e0;"></div>
<div class="a g" style="left:959px;top:5px;width:95px;text-align:right;font-size:14px;line-height:20px;white-space:nowrap;">162</div>
<div class="a" style="left:1064px;top:0;width:1px;height:31px;background:#e0e0e0;"></div>
<div class="a " style="left:1065px;top:5px;width:95px;text-align:right;font-size:14px;line-height:20px;white-space:nowrap;">163.42</div>
<div class="a" style="left:1170px;top:0;width:1px;height:31px;background:#e0e0e0;"></div>
<div class="a " style="left:1171px;top:5px;width:95px;text-align:right;font-size:14px;line-height:20px;white-space:nowrap;">100.37</div>
<div class="a" style="left:1276px;top:0;width:1px;height:31px;background:#e0e0e0;"></div>
<div class="a g" style="left:1277px;top:5px;width:95px;text-align:right;font-size:14px;line-height:20px;white-space:nowrap;">170.26</div>
<div class="a" style="left:1382px;top:0;width:1px;height:31px;background:#e0e0e0;"></div>
<div class="a " style="left:1383px;top:5px;width:95px;text-align:right;font-size:14px;line-height:20px;white-space:nowrap;">165.31</div>
<div class="a" style="left:1488px;top:0;width:1px;height:31px;background:#e0e0e0;"></div>
<div class="a g" style="left:1489px;top:5px;width:95px;text-align:right;font-size:14px;line-height:20px;white-space:nowrap;">168.42</div>
<div class="a" style="left:1594px;top:0;width:1px;height:31px;background:#e0e0e0;"></div>
<div class="a " style="left:1595px;top:5px;width:95px;text-align:right;font-size:14px;line-height:20px;white-space:nowrap;">27,944.83</div>
<div class="a" style="left:1700px;top:0;width:1px;height:31px;background:#e0e0e0;"></div>
<div class="a " style="left:1701px;top:5px;width:95px;text-align:right;font-size:14px;line-height:20px;white-space:nowrap;">3,011.10</div>
</div>
<div class="a" style="left:0;top:403px;width:1805px;height:31px;">
<div class="a" style="left:0;top:30px;width:1805px;height:1px;background:#dcdcdc;"></div>
<svg class="a" style="left:42px;top:11px" width="6" height="9"><path d="M0.5 0V8.5L5 4.25Z" fill="#111"/></svg>
<div class="a" style="left:57.5px;top:5px;font-size:14px;line-height:20px;white-space:nowrap;color:#333;letter-spacing:0.25px;">UNQUAL other</div>
<div class="a" style="left:322px;top:0;width:1px;height:31px;background:#e0e0e0;"></div>
<div class="a " style="left:323px;top:5px;width:95px;text-align:right;font-size:14px;line-height:20px;white-space:nowrap;">150</div>
<div class="a" style="left:428px;top:0;width:1px;height:31px;background:#e0e0e0;"></div>
<div class="a " style="left:429px;top:5px;width:95px;text-align:right;font-size:14px;line-height:20px;white-space:nowrap;">15</div>
<div class="a" style="left:534px;top:0;width:1px;height:31px;background:#e0e0e0;"></div>
<div class="a g" style="left:535px;top:5px;width:95px;text-align:right;font-size:14px;line-height:20px;white-space:nowrap;">136</div>
<div class="a" style="left:640px;top:0;width:1px;height:31px;background:#e0e0e0;"></div>
<div class="a " style="left:641px;top:5px;width:95px;text-align:right;font-size:14px;line-height:20px;white-space:nowrap;">27.66</div>
<div class="a" style="left:746px;top:0;width:1px;height:31px;background:#e0e0e0;"></div>
<div class="a b" style="left:747px;top:6px;width:100px;text-align:right;font-size:14px;line-height:20px;white-space:nowrap;">27.66</div>
<div class="a" style="left:852px;top:0;width:1px;height:31px;background:#e0e0e0;"></div>
<div class="a " style="left:853px;top:5px;width:95px;text-align:right;font-size:14px;line-height:20px;white-space:nowrap;">165.1</div>
<div class="a" style="left:958px;top:0;width:1px;height:31px;background:#e0e0e0;"></div>
<div class="a g" style="left:959px;top:5px;width:95px;text-align:right;font-size:14px;line-height:20px;white-space:nowrap;">130</div>
<div class="a" style="left:1064px;top:0;width:1px;height:31px;background:#e0e0e0;"></div>
<div class="a " style="left:1065px;top:5px;width:95px;text-align:right;font-size:14px;line-height:20px;white-space:nowrap;">221.39</div>
<div class="a" style="left:1170px;top:0;width:1px;height:31px;background:#e0e0e0;"></div>
<div class="a " style="left:1171px;top:5px;width:95px;text-align:right;font-size:14px;line-height:20px;white-space:nowrap;">210.71</div>
<div class="a" style="left:1276px;top:0;width:1px;height:31px;background:#e0e0e0;"></div>
<div class="a g" style="left:1277px;top:5px;width:95px;text-align:right;font-size:14px;line-height:20px;white-space:nowrap;">235.66</div>
<div class="a" style="left:1382px;top:0;width:1px;height:31px;background:#e0e0e0;"></div>
<div class="a " style="left:1383px;top:5px;width:95px;text-align:right;font-size:14px;line-height:20px;white-space:nowrap;">223.10</div>
<div class="a" style="left:1488px;top:0;width:1px;height:31px;background:#e0e0e0;"></div>
<div class="a g" style="left:1489px;top:5px;width:95px;text-align:right;font-size:14px;line-height:20px;white-space:nowrap;">229.67</div>
<div class="a" style="left:1594px;top:0;width:1px;height:31px;background:#e0e0e0;"></div>
<div class="a " style="left:1595px;top:5px;width:95px;text-align:right;font-size:14px;line-height:20px;white-space:nowrap;">33,209.16</div>
<div class="a" style="left:1700px;top:0;width:1px;height:31px;background:#e0e0e0;"></div>
<div class="a " style="left:1701px;top:5px;width:95px;text-align:right;font-size:14px;line-height:20px;white-space:nowrap;">3,160.50</div>
</div>
<div class="a" style="left:0;top:434px;width:1805px;height:31px;">
<div class="a" style="left:0;top:30px;width:1805px;height:1px;background:#dcdcdc;"></div>
<svg class="a" style="left:42px;top:11px" width="6" height="9"><path d="M0.5 0V8.5L5 4.25Z" fill="#111"/></svg>
<div class="a" style="left:57.5px;top:5px;font-size:14px;line-height:20px;white-space:nowrap;color:#333;letter-spacing:0.25px;">UNQUAL unfenced</div>
<div class="a" style="left:322px;top:0;width:1px;height:31px;background:#e0e0e0;"></div>
<div class="a " style="left:323px;top:5px;width:95px;text-align:right;font-size:14px;line-height:20px;white-space:nowrap;">15</div>
<div class="a" style="left:428px;top:0;width:1px;height:31px;background:#e0e0e0;"></div>
<div class="a " style="left:429px;top:5px;width:95px;text-align:right;font-size:14px;line-height:20px;white-space:nowrap;">6</div>
<div class="a" style="left:534px;top:0;width:1px;height:31px;background:#e0e0e0;"></div>
<div class="a g" style="left:535px;top:5px;width:95px;text-align:right;font-size:14px;line-height:20px;white-space:nowrap;">7</div>
<div class="a" style="left:640px;top:0;width:1px;height:31px;background:#e0e0e0;"></div>
<div class="a " style="left:641px;top:5px;width:95px;text-align:right;font-size:14px;line-height:20px;white-space:nowrap;">4.17</div>
<div class="a" style="left:746px;top:0;width:1px;height:31px;background:#e0e0e0;"></div>
<div class="a b" style="left:747px;top:6px;width:100px;text-align:right;font-size:14px;line-height:20px;white-space:nowrap;">4.17</div>
<div class="a" style="left:852px;top:0;width:1px;height:31px;background:#e0e0e0;"></div>
<div class="a " style="left:853px;top:5px;width:95px;text-align:right;font-size:14px;line-height:20px;white-space:nowrap;">17.7</div>
<div class="a" style="left:958px;top:0;width:1px;height:31px;background:#e0e0e0;"></div>
<div class="a g" style="left:959px;top:5px;width:95px;text-align:right;font-size:14px;line-height:20px;white-space:nowrap;">11</div>
<div class="a" style="left:1064px;top:0;width:1px;height:31px;background:#e0e0e0;"></div>
<div class="a " style="left:1065px;top:5px;width:95px;text-align:right;font-size:14px;line-height:20px;white-space:nowrap;">253.86</div>
<div class="a" style="left:1170px;top:0;width:1px;height:31px;background:#e0e0e0;"></div>
<div class="a " style="left:1171px;top:5px;width:95px;text-align:right;font-size:14px;line-height:20px;white-space:nowrap;">258.71</div>
<div class="a" style="left:1276px;top:0;width:1px;height:31px;background:#e0e0e0;"></div>
<div class="a g" style="left:1277px;top:5px;width:95px;text-align:right;font-size:14px;line-height:20px;white-space:nowrap;">261.86</div>
<div class="a" style="left:1382px;top:0;width:1px;height:31px;background:#e0e0e0;"></div>
<div class="a " style="left:1383px;top:5px;width:95px;text-align:right;font-size:14px;line-height:20px;white-space:nowrap;">253.27</div>
<div class="a" style="left:1488px;top:0;width:1px;height:31px;background:#e0e0e0;"></div>
<div class="a g" style="left:1489px;top:5px;width:95px;text-align:right;font-size:14px;line-height:20px;white-space:nowrap;">255.36</div>
<div class="a" style="left:1594px;top:0;width:1px;height:31px;background:#e0e0e0;"></div>
<div class="a " style="left:1595px;top:5px;width:95px;text-align:right;font-size:14px;line-height:20px;white-space:nowrap;">3,807.85</div>
<div class="a" style="left:1700px;top:0;width:1px;height:31px;background:#e0e0e0;"></div>
<div class="a " style="left:1701px;top:5px;width:95px;text-align:right;font-size:14px;line-height:20px;white-space:nowrap;">1,552.20</div>
</div>
</div>
<div class="a" style="left:0;top:0;width:1px;height:517px;background:#e0e0e0;"></div>
<div class="a" style="left:1787px;top:50px;width:17px;height:450px;background:#f1f1f1;">
<svg class="a" style="left:5px;top:9px" width="7" height="4"><path d="M0 4H7L3.5 0Z" fill="#a3a3a3"/></svg>
<div class="a" style="left:2px;top:17px;width:13px;height:356px;background:#c1c1c1;"></div>
<svg class="a" style="left:5px;top:439px" width="7" height="4"><path d="M0 0H7L3.5 4Z" fill="#505050"/></svg>
</div>
<div class="a" style="left:0;top:500px;width:1787px;height:17px;background:#f1f1f1;">
<svg class="a" style="left:7px;top:5px" width="4" height="7"><path d="M4 0V7L0 3.5Z" fill="#a3a3a3"/></svg>
<div class="a" style="left:18px;top:2px;width:1228px;height:13px;background:#c1c1c1;"></div>
<svg class="a" style="left:1777px;top:5px" width="4" height="7"><path d="M0 0V7L4 3.5Z" fill="#505050"/></svg>
</div>
<div class="a" style="left:1787px;top:500px;width:17px;height:17px;background:#dcdcdc;"></div>
<div class="a" style="left:0;top:516px;width:1805px;height:1px;background:#d9d9d9;"></div>
<div class="a" style="left:1804px;top:0;width:1px;height:517px;background:#d9d9d9;"></div>

</div>
</body></html>
